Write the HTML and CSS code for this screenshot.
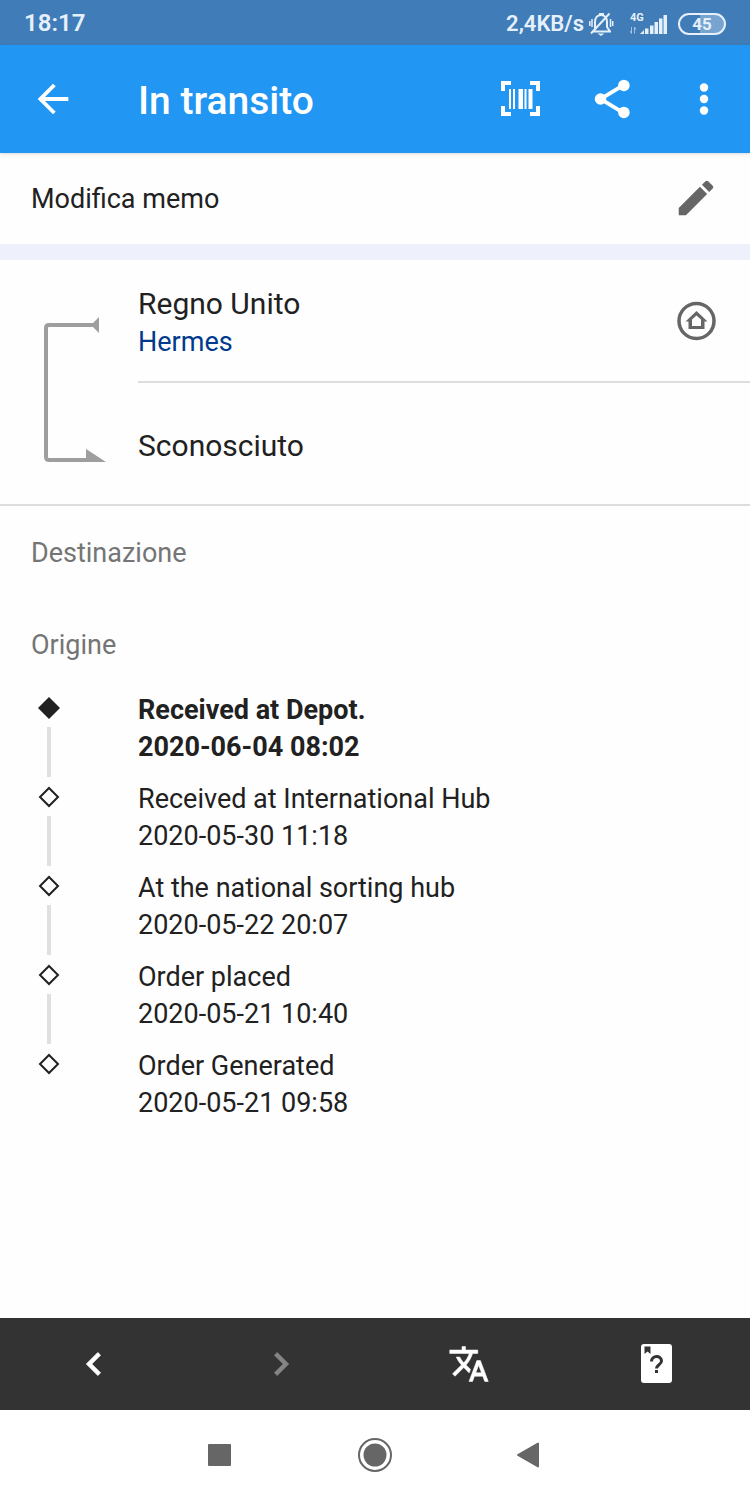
FILE: index.html
```
<!DOCTYPE html>
<html lang="it">
<head>
    <meta charset="UTF-8">
    <meta name="viewport" content="width=device-width, initial-scale=1.0">
    <title>In transito</title>
    <link rel="stylesheet" href="styles.css">
</head>
<body>
    <!-- Phone status bar -->
    <div class="status-bar">
        <span class="clock">18:17</span>
        <span class="speed">2,4KB/s</span>
        <svg class="mute" width="26" height="26" viewBox="0 0 26 26" fill="none" stroke="#e6f0fb" stroke-width="2">
            <path d="M4 20.500h19M7 19v-8c0-4 2.500-7 6-7s6 3 6 7v5l3 4.500M11 3h5M3 22.500L21.500 2.500"/>
            <path d="M4 8v8M1.800 10v5M22.500 8v8M24.700 10v5" stroke-width="1.500"/>
            <path d="M9.500 22.500h7l-3.500 2.500z" fill="#e6f0fb" stroke="none"/>
        </svg>
        <svg class="signal" width="38" height="26" viewBox="0 0 38 26" fill="#e6f0fb">
            <text x="0" y="10" class="network">4G</text>
            <path d="M10 23l4-4v4zM15 17.500h3.500V23H15zM20 14.500h3.500V23H20zM24.500 11H28v12h-3.500zM29 7.500h3.500V23H29zM33.500 4H37v19h-3.500z"/>
            <path d="M0 20l1.500 2.500V16M4.500 22.500V16l1.500 2.500" fill="none" stroke="#a5c4e4" stroke-width="1"/>
        </svg>
        <span class="battery">45</span>
    </div>

    <header class="app-bar">
        <button class="icon-button" aria-label="Indietro">
            <svg width="46" height="46" viewBox="0 0 24 24" fill="#fff"><path d="M20 11H7.830l5.590-5.590L12 4l-8 8 8 8 1.410-1.410L7.830 13H20v-2z"/></svg>
        </button>
        <h1>In transito</h1>
        <div class="actions">
            <button class="icon-button" aria-label="Codice a barre">
                <svg width="46" height="46" viewBox="0 0 46 46" fill="#fff">
                    <path d="M4 5h10v4H8v6H4zM33 5h10v10h-4V9h-6zM4 30h4v6h6v4H4zM39 30h4v10H33v-4h6z"/>
                    <path d="M12 13h2v20h-2zM16 13h2v20h-2zM21.500 13h4.500v20h-4.500zM27.500 13h2v20h-2zM31.500 13h4v20h-4z"/>
                </svg>
            </button>
            <button class="icon-button" aria-label="Condividi">
                <svg width="46" height="46" viewBox="0 0 24 24" fill="#fff">
                    <path d="M18 4.800L6 12l12 7.200" fill="none" stroke="#fff" stroke-width="2"/>
                    <circle cx="18.200" cy="4.900" r="3"/>
                    <circle cx="6" cy="12" r="3"/>
                    <circle cx="18.200" cy="19" r="3"/>
                </svg>
            </button>
            <button class="icon-button" aria-label="Altro">
                <svg width="46" height="46" viewBox="0 0 24 24" fill="#fff">
                    <circle cx="12" cy="6" r="2.200"/>
                    <circle cx="12" cy="12" r="2.200"/>
                    <circle cx="12" cy="18" r="2.200"/>
                </svg>
            </button>
        </div>
    </header>

    <main>
        <section class="memo">
            <span>Modifica memo</span>
            <button class="icon-button" aria-label="Modifica memo">
                <svg width="46" height="46" viewBox="0 0 24 24" fill="#666"><path d="M3 17.250V21h3.750L17.810 9.940l-3.750-3.750L3 17.250zM20.710 7.040c.39-.39.39-1.020 0-1.410l-2.340-2.340c-.39-.39-1.020-.39-1.410 0l-1.830 1.830 3.750 3.750 1.830-1.830z"/></svg>
            </button>
        </section>

        <section class="route">
            <svg class="bracket" width="64" height="148" viewBox="0 0 64 148">
                <path d="M54 9H6q-3 0-3 3v129q0 3 3 3h44" fill="none" stroke="#9e9e9e" stroke-width="4"/>
                <path d="M50 7l6-6v16l-6-6zM43 133l20 13H43z" fill="#9e9e9e"/>
            </svg>
            <div class="stops">
                <div class="stop from">
                    <div>
                        <div class="place">Regno Unito</div>
                        <a class="carrier" href="#">Hermes</a>
                    </div>
                    <button class="icon-button" aria-label="Sito del corriere">
                        <svg width="46" height="46" viewBox="0 0 46 46" fill="none" stroke="#666">
                            <circle cx="22.500" cy="21" r="17.500" stroke-width="3.500"/>
                            <path d="M11.500 21.500l11-10.500 11 10.500h-3V29h-16v-7.500zM18 26h9v-6.500l-4.500-4-4.500 4z" fill="#666" fill-rule="evenodd" stroke="none"/>
                        </svg>
                    </button>
                </div>
                <div class="stop to">
                    <div class="place">Sconosciuto</div>
                </div>
            </div>
        </section>

        <section class="tracking">
            <h2>Destinazione</h2>
            <h2>Origine</h2>
            <ol class="events">
                <li class="latest">
                    <svg class="marker" width="22" height="22" viewBox="0 0 22 22"><path d="M11 0l11 11-11 11L0 11z"/></svg>
                    <div>Received at Depot.<br><time>2020-06-04 08:02</time></div>
                </li>
                <li>
                    <svg class="marker" width="22" height="22" viewBox="0 0 22 22"><path d="M11 2l9 9-9 9-9-9z"/></svg>
                    <div>Received at International Hub<br><time>2020-05-30 11:18</time></div>
                </li>
                <li>
                    <svg class="marker" width="22" height="22" viewBox="0 0 22 22"><path d="M11 2l9 9-9 9-9-9z"/></svg>
                    <div>At the national sorting hub<br><time>2020-05-22 20:07</time></div>
                </li>
                <li>
                    <svg class="marker" width="22" height="22" viewBox="0 0 22 22"><path d="M11 2l9 9-9 9-9-9z"/></svg>
                    <div>Order placed<br><time>2020-05-21 10:40</time></div>
                </li>
                <li>
                    <svg class="marker" width="22" height="22" viewBox="0 0 22 22"><path d="M11 2l9 9-9 9-9-9z"/></svg>
                    <div>Order Generated<br><time>2020-05-21 09:58</time></div>
                </li>
            </ol>
        </section>
    </main>

    <div class="toolbar">
        <button aria-label="Precedente">
            <svg width="46" height="46" viewBox="0 0 24 24" fill="#fff" stroke="#fff" stroke-width=".4"><path d="M15.410 7.410L14 6l-6 6 6 6 1.410-1.410L10.830 12z"/></svg>
        </button>
        <button aria-label="Successivo" disabled>
            <svg width="46" height="46" viewBox="0 0 24 24" fill="#858585" stroke="#858585" stroke-width=".4"><path d="M10 6L8.590 7.410 13.170 12l-4.580 4.590L10 18l6-6z"/></svg>
        </button>
        <button aria-label="Traduci">
            <svg width="42" height="42" viewBox="0 0 24 24" fill="#fff" stroke="#fff" stroke-width=".3"><path d="M12.870 15.070l-2.540-2.510.03-.03c1.740-1.940 2.980-4.170 3.710-6.530H17V4h-7V2H8v2H1v1.990h11.170C11.500 7.920 10.440 9.750 9 11.350 8.070 10.320 7.300 9.190 6.690 8h-2c.73 1.630 1.730 3.170 2.980 4.560l-5.090 5.020L4 19l5-5 3.110 3.110.76-2.040zM18.500 10h-2L12 22h2l1.120-3h4.750L21 22h2l-4.500-12zm-2.620 7l1.620-4.330L19.120 17h-3.240z"/></svg>
        </button>
        <button aria-label="Aiuto">
            <svg width="32" height="40" viewBox="0 0 32 40">
                <rect x="1" y="0" width="31" height="39" rx="3" fill="#fff"/>
                <path d="M4.500 2.500h6v7.500l-3-2.500-3 2.500z" fill="#333"/>
                <path d="M11.500 17.500c0-6.500 10-6.500 10-.5 0 3.500-5 4-5 7.500" fill="none" stroke="#333" stroke-width="3"/>
                <path d="M15 26h3v3h-3z" fill="#333"/>
            </svg>
        </button>
    </div>

    <!-- Phone navigation keys -->
    <nav class="system-nav">
        <button aria-label="App recenti">
            <svg width="36" height="36" viewBox="0 0 36 36" fill="#666"><rect x="7" y="7" width="23" height="22" rx="1"/></svg>
        </button>
        <button aria-label="Home">
            <svg width="36" height="36" viewBox="0 0 36 36" fill="#666"><circle cx="18" cy="18" r="11.500"/><circle cx="18" cy="18" r="16" fill="none" stroke="#666" stroke-width="2"/></svg>
        </button>
        <button aria-label="Indietro">
            <svg width="36" height="36" viewBox="0 0 36 36" fill="#666" stroke="#666" stroke-width="2" stroke-linejoin="round"><path d="M5 18l20-11.500v23z"/></svg>
        </button>
    </nav>
</body>
</html>
```
FILE: styles.css
```
* {
    box-sizing: border-box;
}

body {
    margin: 0;
    min-height: 100vh;
    display: flex;
    flex-direction: column;
    font-family: Roboto, sans-serif;
    font-size: 27px;
    line-height: 37px;
    color: #212121;
    background-color: #fefefe;
}

button {
    display: flex;
    align-items: center;
    justify-content: center;
    padding: 0;
    border: none;
    background: none;
    cursor: pointer;
}

.status-bar {
    display: flex;
    align-items: center;
    height: 45px;
    padding: 2px 24px 0;
    font-size: 22px;
    font-weight: 600;
    color: #e6f0fb;
    background-color: #3f7cb8;
}

.clock {
    flex: 1;
    font-size: 24px;
}

.mute {
    margin-left: 4px;
}

.signal {
    margin-left: 16px;
}

.network {
    font-size: 11px;
    font-weight: 700;
}

.battery {
    width: 48px;
    height: 22px;
    margin-left: 10px;
    border: 2px solid #e6f0fb;
    border-radius: 11px;
    font-size: 17px;
    font-weight: 700;
    line-height: 18px;
    text-align: center;
    background: linear-gradient(90deg, #3f7cb8 45%, #77a3d1 45%);
}

.app-bar {
    display: flex;
    align-items: center;
    height: 108px;
    padding-left: 30px;
    color: #fff;
    background-color: #2196f3;
    box-shadow: 0 1px 3px rgba(0, 0, 0, 0.15);
}

.app-bar h1 {
    flex: 1;
    margin: 4px 0 0 62px;
    font-size: 39px;
    font-weight: 500;
}

.actions {
    display: flex;
}

.actions .icon-button {
    width: 92px;
}

main {
    flex: 1;
}

.memo {
    display: flex;
    align-items: center;
    justify-content: space-between;
    padding: 22px 31px 23px;
    border-bottom: 16px solid #eef1fb;
}

.memo span {
    padding-top: 3px;
}

.route {
    display: flex;
    align-items: center;
    height: 246px;
    border-bottom: 2px solid #ddd;
}

.bracket {
    flex-shrink: 0;
    margin: 16px 31px 0 43px;
}

.stops {
    flex: 1;
}

.stop {
    display: flex;
    align-items: center;
    justify-content: space-between;
    height: 121px;
    padding-right: 30px;
}

.from {
    height: 123px;
    padding-top: 4px;
    border-bottom: 2px solid #ddd;
}

.to {
    padding-top: 5px;
}

.place {
    font-size: 30px;
    line-height: 40px;
}

.carrier {
    display: block;
    color: #003a8c;
    text-decoration: none;
}

.tracking {
    padding: 1px 31px 0;
}

.tracking h2 {
    margin: 0;
    font-size: 27px;
    line-height: 92px;
    font-weight: 400;
    color: #757575;
}

.events {
    margin: 0;
    padding: 1px 0 0;
    list-style: none;
}

.events li {
    display: grid;
    grid-template-columns: 36px 1fr;
    grid-template-rows: 27px 50px;
    column-gap: 71px;
    row-gap: 8px;
    height: 89px;
}

.events li > div {
    grid-column: 2;
    grid-row: 1 / 3;
}

/* Line that links one event to the next */
.events li:not(:last-child)::after {
    content: "";
    grid-column: 1;
    grid-row: 2;
    justify-self: center;
    width: 4px;
    background-color: #e0e0e0;
}

.marker {
    align-self: end;
    justify-self: center;
    fill: none;
    stroke: #212121;
    stroke-width: 2;
}

.latest {
    font-weight: 700;
}

.latest .marker {
    fill: #212121;
    stroke: none;
}

.toolbar {
    display: grid;
    grid-template-columns: repeat(4, 1fr);
    height: 92px;
    background-color: #333;
}

.system-nav {
    display: flex;
    justify-content: center;
    gap: 120px;
    height: 90px;
    background-color: #fff;
}
```
